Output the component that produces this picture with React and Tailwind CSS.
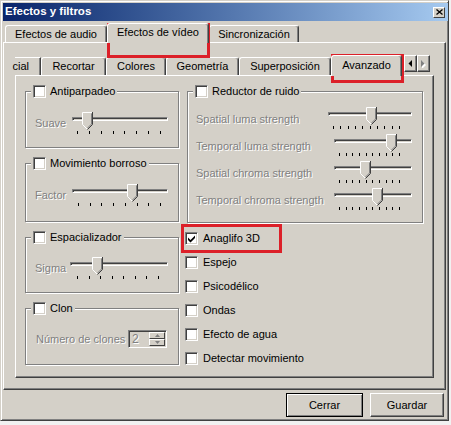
import React from "react";

const noise = [
  { label: "Spatial luma strength", width: "w-[84px]", value: 38 },
  { label: "Temporal luma strength", width: "w-[78px]", value: 52 },
  { label: "Spatial chroma strength", width: "w-[78px]", value: 26 },
  { label: "Temporal chroma strength", width: "w-[78px]", value: 38 },
];

const toggles = ["Espejo", "Psicodélico", "Ondas", "Efecto de agua", "Detectar movimiento"];

const subTabs = [
  { label: "Recortar", width: "w-[65px]" },
  { label: "Colores", width: "w-[60px]" },
  { label: "Geometría", width: "w-[73px]" },
  { label: "Superposición", width: "w-[92px]" },
];

const Check = ({ checked }) => (
  <div className="w-[13px] h-[13px] shrink-0 bg-white border border-t-[#808080] border-l-[#808080] border-b-white border-r-white shadow-[inset_1px_1px_0_#404040,inset_-1px_-1px_0_#d4d0c8] flex items-center justify-center">
    {checked && (
      <svg width="7" height="8" viewBox="0 0 7 8">
        <polygon points="0,2.5 2.5,5 7,0.5 7,3 2.5,7.5 0,5" fill="#000" />
      </svg>
    )}
  </div>
);

const Thumb = () => (
  <svg width="11" height="18" viewBox="0 0 11 18">
    <path d="M0.5 0.5H10.5V12.5L5.5 17.5L0.5 12.5Z" fill="#d4d0c8" />
    <path d="M0.5 12.5V0.5H10" stroke="#fff" fill="none" />
    <path d="M0.5 12.5L5 17" stroke="#fff" fill="none" />
    <path d="M10.5 0V12.5L5.5 17.5" stroke="#404040" fill="none" />
    <path d="M9.5 1.5V12L5.5 16" stroke="#808080" fill="none" />
  </svg>
);

const Slider = ({ width, value, ticks = 8, tickPad }) => (
  <div className={`relative h-[22px] shrink-0 ${width}`}>
    <div className="mt-[5px] h-[4px] bg-[#d4d0c8] border border-t-[#808080] border-l-[#808080] border-b-white border-r-white shadow-[inset_1px_1px_0_#404040]" />
    <div className={`mt-[10px] flex justify-between ${tickPad}`}>
      {Array.from({ length: ticks }).map((_, i) => (
        <div key={i} className="w-px h-[3px] bg-black" />
      ))}
    </div>
    <div className="absolute top-0" style={{ left: value }}>
      <Thumb />
    </div>
  </div>
);

const Dim = ({ children, className = "" }) => (
  <span className={`text-[#808080] [text-shadow:1px_1px_0_#fff] whitespace-nowrap ${className}`}>
    {children}
  </span>
);

const Group = ({ label, className, children }) => (
  <fieldset className={`border border-[#808080] shadow-[inset_1px_1px_0_#fff,1px_1px_0_#fff] ${className}`}>
    <legend className="ml-[5px] px-[2px] bg-[#d4d0c8]">
      <div className="flex items-center gap-[4px] h-[13px]">
        <Check />
        <span className="leading-[13px] whitespace-nowrap">{label}</span>
      </div>
    </legend>
    {children}
  </fieldset>
);

const Arrow = ({ dir, disabled }) => (
  <div className="w-[13px] h-[17px] flex items-center justify-center border border-t-white border-l-white border-r-[#404040] border-b-[#404040] shadow-[inset_-1px_-1px_0_#808080]">
    <svg width="5" height="8" viewBox="0 0 5 8">
      {disabled && <polygon points="1,1 5,5 1,9" fill="#fff" />}
      <polygon
        points={dir === "left" ? "4,0 4,7 0.5,3.5" : "0,0 0,7 3.5,3.5"}
        fill={disabled ? "#808080" : "#000"}
      />
    </svg>
  </div>
);

const SpinBtn = ({ up }) => (
  <div className="h-[8px] flex items-center justify-center border border-t-white border-l-white border-r-[#404040] border-b-[#404040]">
    <svg width="5" height="3" viewBox="0 0 5 3">
      <polygon points={up ? "2.5,0 5,3 0,3" : "0,0 5,0 2.5,3"} fill="#808080" />
    </svg>
  </div>
);

const raised =
  "border border-t-white border-l-white border-r-[#404040] border-b-[#404040] shadow-[inset_-1px_0_0_#808080]";

export default function App() {
  return (
    <div className="relative w-[451px] h-[425px] bg-[#f1f1f1] overflow-hidden font-['Liberation_Sans',Arial,sans-serif] text-[11px] text-black">
      {/* window */}
      <div className="w-[449px] h-[421px] bg-[#d4d0c8] border border-t-[#d4d0c8] border-l-[#d4d0c8] border-r-[#404040] border-b-[#404040] shadow-[inset_1px_1px_0_#fff,inset_-1px_-1px_0_#808080] pl-[2px] pt-[2px] flex flex-col">
        {/* title bar */}
        <div className="h-[18px] flex items-center justify-between pl-[2px] pr-[3px] bg-linear-to-r from-[#0a246a] to-[#a6caf0]">
          <span className="text-white font-bold text-[11.5px] leading-none">Efectos y filtros</span>
          <div className="w-[12px] h-[11px] bg-[#d4d0c8] flex items-center justify-center border border-t-white border-l-white border-r-[#404040] border-b-[#404040]">
            <svg width="7" height="6" viewBox="0 0 7 6">
              <path d="M0.5 0.5L6.5 5.5M6.5 0.5L0.5 5.5" stroke="#000" strokeWidth="1.3" />
            </svg>
          </div>
        </div>

        {/* top tabs */}
        <div className="mt-[2px] pl-[2px] h-[19px] flex items-end">
          <div className={`w-[102px] h-[17px] flex items-center justify-center rounded-t-[3px] border-b-0 ${raised}`}>
            Efectos de audio
          </div>
          <div className={`relative z-10 w-[102px] h-[20px] -mb-px pb-[2px] bg-[#d4d0c8] flex items-center justify-center rounded-t-[3px] border-b-0 ${raised}`}>
            Efectos de vídeo
          </div>
          <div className={`w-[90px] h-[17px] flex items-center justify-center rounded-t-[3px] border-b-0 ${raised}`}>
            Sincronización
          </div>
        </div>

        {/* outer panel */}
        <div className="w-[443px] h-[348px] border border-t-white border-l-white border-r-[#404040] border-b-[#404040] shadow-[inset_-1px_-1px_0_#808080] pt-[12px] pl-[11px]">
          {/* sub tabs, scrolled so only the end of the first one shows */}
          <div className="h-[20px] flex items-end">
            <div className="w-[26px] h-[18px] flex items-center justify-end pr-[11px] border-t border-t-white border-r border-r-[#404040] shadow-[inset_-1px_0_0_#808080] whitespace-nowrap">
              cial
            </div>
            {subTabs.map((t) => (
              <div
                key={t.label}
                className={`${t.width} h-[18px] flex items-center justify-center rounded-t-[3px] border-b-0 ${raised}`}
              >
                {t.label}
              </div>
            ))}
            <div className={`relative z-10 w-[71px] h-[21px] -mb-px pb-[2px] bg-[#d4d0c8] flex items-center justify-center rounded-t-[3px] border-b-0 ${raised}`}>
              Avanzado
            </div>
            <div className="self-start ml-[2px] flex">
              <Arrow dir="left" />
              <Arrow dir="right" disabled />
            </div>
          </div>

          {/* inner panel */}
          <div className="w-[419px] h-[303px] border border-t-white border-l-white border-r-[#404040] border-b-[#404040] shadow-[inset_-1px_-1px_0_#808080] pt-[9px] pl-[9px] flex gap-[6px]">
            {/* left column */}
            <div className="w-[154px] flex flex-col gap-[9px]">
              <Group label="Antiparpadeo" className="w-[154px] pt-[14px] pb-[13px]">
                <div className="flex items-center pl-[9px]">
                  <Dim className="w-[37px]">Suave</Dim>
                  <Slider width="w-[96px]" value={10} tickPad="pl-[5px] pr-[7px]" />
                </div>
              </Group>
              <Group label="Movimiento borroso" className="w-[154px] pt-[14px] pb-[15px]">
                <div className="flex items-center pl-[9px]">
                  <Dim className="w-[37px]">Factor</Dim>
                  <Slider width="w-[96px]" value={55} tickPad="pl-[6px] pr-[7px]" />
                </div>
              </Group>
              <Group label="Espacializador" className="w-[154px] pt-[13px] pb-[13px]">
                <div className="flex items-center pl-[9px]">
                  <Dim className="w-[35px]">Sigma</Dim>
                  <Slider width="w-[98px]" value={22} tickPad="pl-[7px] pr-[9px]" />
                </div>
              </Group>
              <Group label="Clon" className="w-[154px] pt-[15px] pb-[16px]">
                <div className="flex items-center pl-[10px]">
                  <Dim className="w-[92px]">Número de clones</Dim>
                  <div className="w-[39px] h-[18px] flex border border-t-[#808080] border-l-[#808080] border-b-white border-r-white shadow-[inset_1px_1px_0_#404040,inset_-1px_-1px_0_#d4d0c8] p-px">
                    <Dim className="flex-1 pl-[2px] leading-[14px] text-[12px]">2</Dim>
                    <div className="w-[16px] flex flex-col">
                      <SpinBtn up />
                      <SpinBtn />
                    </div>
                  </div>
                </div>
              </Group>
            </div>

            {/* right column */}
            <div className="flex flex-col">
              <Group label="Reductor de ruido" className="ml-[2px] w-[236px] pt-[9px] pb-[12px]">
                <div className="flex flex-col gap-[5px]">
                  {noise.map((n) => (
                    <div key={n.label} className="flex items-center justify-between pl-[8px] pr-[10px]">
                      <Dim className="pt-[2px]">{n.label}</Dim>
                      <Slider width={n.width} value={n.value} ticks={10} tickPad="pl-[5px] pr-[12px]" />
                    </div>
                  ))}
                </div>
              </Group>
              <div className="mt-[9px] flex flex-col gap-[11px]">
                <div className="flex items-center gap-[5px] h-[13px]">
                  <Check checked />
                  <span>Anaglifo 3D</span>
                </div>
                {toggles.map((t) => (
                  <div key={t} className="flex items-center gap-[5px] h-[13px]">
                    <Check />
                    <span>{t}</span>
                  </div>
                ))}
              </div>
            </div>
          </div>
        </div>

        {/* buttons */}
        <div className="mt-[3px] pr-[4px] flex justify-end gap-[7px]">
          <button className="w-[77px] h-[24px] border border-black shadow-[inset_1px_1px_0_#fff,inset_-1px_-1px_0_#808080] text-[11px]">
            Cerrar
          </button>
          <button className="w-[74px] h-[24px] border border-t-white border-l-white border-r-[#404040] border-b-[#404040] shadow-[inset_-1px_-1px_0_#808080] text-[11px]">
            Guardar
          </button>
        </div>
      </div>

      {/* red annotation boxes */}
      <div className="absolute left-[107px] top-[23px] w-[103px] h-[35px] border-[3px] border-[#dc2029] pointer-events-none" />
      <div className="absolute left-[331px] top-[54px] w-[73px] h-[29px] border-[3px] border-[#dc2029] pointer-events-none" />
      <div className="absolute left-[181px] top-[224px] w-[101px] h-[29px] border-[3px] border-[#dc2029] pointer-events-none" />
    </div>
  );
}
